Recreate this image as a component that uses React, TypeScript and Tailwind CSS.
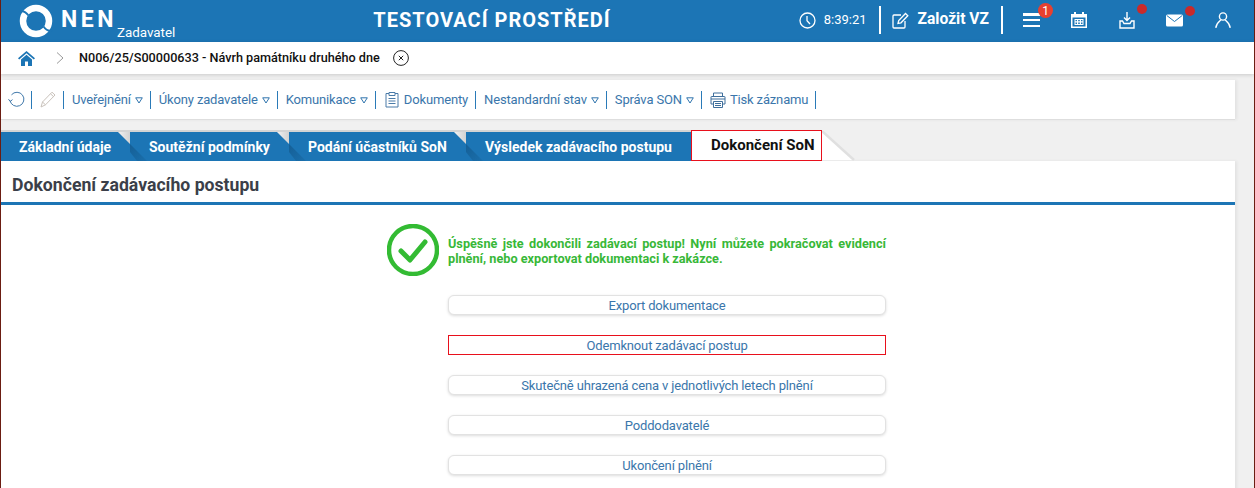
import React from "react";

const BLUE = "#1c75b5";

function Caret() {
  return (
    <svg width="8" height="7" viewBox="0 0 8 7" className="ml-[4px] mt-[2px] shrink-0">
      <path d="M0.7 0.8 H7.3 L4 6 Z" fill="none" stroke="#2f74ad" strokeWidth="1" />
    </svg>
  );
}

function TBItem({ children, caret }: { children: React.ReactNode; caret?: boolean }) {
  return (
    <>
      <span className="flex items-center whitespace-nowrap text-[13px] tracking-[-0.15px] text-[#3a76ab]">
        {children}
        {caret && <Caret />}
      </span>
      <span className="ml-[7px] mr-[8px] h-[18px] w-px shrink-0 bg-[#2a7ab8]" />
    </>
  );
}

function Fold() {
  return (
    <svg width="32" height="29" viewBox="0 0 32 29" className="absolute left-[-12px] top-0 z-10">
      <defs>
        <linearGradient id="fold" x1="0" y1="0" x2="1" y2="0">
          <stop offset="0" stopColor="#f2f2f2" />
          <stop offset="1" stopColor="#d2d2d2" />
        </linearGradient>
        <linearGradient id="shade" x1="0" y1="0" x2="1" y2="1">
          <stop offset="0" stopColor="#155f96" />
          <stop offset="1" stopColor="#1a6fac" />
        </linearGradient>
      </defs>
      <polygon points="0,0 12,0 12,12" fill="url(#fold)" />
      <polygon points="12,12 29,29 19,29 12,20" fill="url(#shade)" />
    </svg>
  );
}

function Tab({ w, children, first }: { w: string; children: React.ReactNode; first?: boolean }) {
  return (
    <div className={`relative flex h-[29px] items-center pt-[1px] text-[14px] font-bold text-white ${first ? "pl-[18px]" : "pl-[19px]"} ${w} bg-[#1c75b5] shadow-[0_-2px_0_#d4d4d4]`}>
      {!first && <Fold />}
      <span className="relative z-20">{children}</span>
    </div>
  );
}

function Btn({ children, red }: { children: React.ReactNode; red?: boolean }) {
  return (
    <div
      className={
        "flex h-5 w-[438px] items-center justify-center bg-white pt-[1px] text-[13px] tracking-[-0.15px] text-[#3a76ab] " +
        (red ? "border border-[#e8101c]" : "rounded-md border border-[#e2e2e2] shadow-[0_1px_3px_rgba(0,0,0,0.14)]")
      }
    >
      {children}
    </div>
  );
}

function Logo() {
  return (
    <svg width="34" height="34" viewBox="0 0 34 34" fill="none">
      <circle cx="17" cy="17" r="13" stroke="#fff" strokeWidth="6.5" />
      <path d="M9.5 11.5 C7 8 4.5 6.5 1 7.5" stroke={BLUE} strokeWidth="2" />
      <path d="M24.5 22.5 C27 26 29.5 27.5 33 26.5" stroke={BLUE} strokeWidth="2" />
    </svg>
  );
}

export default function App() {
  return (
    <div className="relative h-[488px] w-full overflow-hidden border-x border-[#6b1d12] bg-[#f0f0f0] font-['Roboto',sans-serif]">
      {/* header */}
      <header className="flex h-[42px] items-center bg-[#1c75b5] text-white">
        <div className="ml-[18px] shrink-0">
          <Logo />
        </div>
        <span className="mb-[3px] ml-[8px] text-[23px] font-bold leading-none tracking-[3.5px]">NEN</span>
        <span className="mt-[23px] text-[13.4px] leading-none">Zadavatel</span>
        <span className="mb-[2px] ml-[198px] whitespace-nowrap text-[20px] font-bold tracking-[1px]">TESTOVACÍ PROSTŘEDÍ</span>
        <div className="mb-[2px] ml-auto flex items-center">
          <svg width="17" height="17" viewBox="0 0 17 17" fill="none" stroke="#fff" strokeWidth="1.3" className="shrink-0">
            <circle cx="8.5" cy="8.5" r="7.5" />
            <path d="M8 4 V8.7 L11 12" />
          </svg>
          <span className="ml-[8px] text-[13px]">8:39:21</span>
          <span className="ml-[12px] h-[28px] w-[2px] bg-white" />
          <svg width="17" height="17" viewBox="0 0 17 17" fill="none" stroke="#fff" strokeWidth="1.3" className="ml-[11px] shrink-0">
            <path d="M9 3 H2 Q1 3 1 4 V15 Q1 16 2 16 H12 Q13 16 13 15 V9" />
            <path d="M6 11.5 L6.7 8.5 L13.5 1.5 L15.8 3.7 L9 10.8 Z" />
          </svg>
          <span className="ml-[9px] text-[15.6px] font-bold">Založit VZ</span>
          <span className="ml-[12px] h-[28px] w-[2px] bg-white" />
          <div className="relative ml-[20px] h-[14px] w-[17px]">
            <div className="flex h-full flex-col justify-between">
              <span className="h-[2.5px] bg-white" />
              <span className="h-[2.5px] bg-white" />
              <span className="h-[2.5px] bg-white" />
            </div>
            <span className="absolute left-[15px] top-[-10px] flex h-[15px] w-[15px] items-center justify-center rounded-full bg-[#e8402f] text-[12px] leading-none">1</span>
          </div>
          <svg width="16" height="16" viewBox="0 0 16 16" className="ml-[31px] shrink-0" fill="#fff">
            <path fillRule="evenodd" d="M0 2 H3 V0 H5 V2 H11 V0 H13 V2 H16 V16 H0 Z M1.5 5.5 V14.5 H14.5 V5.5 Z" />
            <path d="M3.5 7 H12.5 V13 H3.5 Z M4.5 8 V9.3 H6 V8 Z M7.2 8 V9.3 H8.8 V8 Z M10 8 V9.3 H11.5 V8 Z M4.5 10.5 V12 H6 V10.5 Z M7.2 10.5 V12 H8.8 V10.5 Z M10 10.5 V12 H11.5 V10.5 Z" fillRule="evenodd" />
          </svg>
          <div className="relative ml-[32px] h-[17px] w-[16px]">
            <svg width="16" height="17" viewBox="0 0 16 17" fill="none" stroke="#fff" strokeWidth="1.4">
              <path d="M8 0 V8 M5 5.5 L8 8.5 L11 5.5" />
              <path d="M3.5 9 H1 V16 H15 V9 H12.5 L11 11.5 H5 Z" />
            </svg>
            <span className="absolute left-[18px] top-[-8px] h-[10px] w-[10px] rounded-full bg-[#c92a2a]" />
          </div>
          <div className="relative ml-[31px] h-[13px] w-[17px]">
            <svg width="17" height="13" viewBox="0 0 17 13">
              <rect width="17" height="12" y="0.5" rx="1.5" fill="#fff" />
              <path d="M0.8 1.5 L8.5 7.5 L16.2 1.5" fill="none" stroke="#1c75b5" strokeWidth="1" />
            </svg>
            <span className="absolute left-[19px] top-[-8px] h-[10px] w-[10px] rounded-full bg-[#c92a2a]" />
          </div>
          <svg width="16" height="16" viewBox="0 0 16 16" fill="none" stroke="#fff" strokeWidth="1.4" className="ml-[32px] mr-[23px] shrink-0">
            <circle cx="8" cy="4.5" r="3.6" />
            <path d="M0.8 15.8 C1.5 11 4 9.5 5.8 8 M15.2 15.8 C14.5 11 12 9.5 10.2 8" />
          </svg>
        </div>
      </header>

      {/* breadcrumb */}
      <div className="relative z-10 flex h-[32px] items-center bg-white shadow-[0_1px_4px_rgba(0,0,0,0.16)]">
        <svg width="17" height="15" viewBox="0 0 17 15" className="ml-[17px] shrink-0" fill={BLUE}>
          <path d="M8.5 0 L17 7.2 L15.8 8.4 L8.5 2.3 L1.2 8.4 L0 7.2 Z" />
          <path d="M3 8.5 L8.5 3.8 L14 8.5 V15 H10 V10.5 H7 V15 H3 Z" />
        </svg>
        <svg width="8" height="12" viewBox="0 0 8 12" fill="none" stroke="#9a9a9a" strokeWidth="1" className="ml-[21px] shrink-0">
          <path d="M1 0.5 L7 6 L1 11.5" />
        </svg>
        <span className="ml-[15px] whitespace-nowrap text-[12.65px] font-medium text-[#111]">N006/25/S00000633 - Návrh památníku druhého dne</span>
        <svg width="16" height="16" viewBox="0 0 16 16" fill="none" stroke="#222" strokeWidth="1" className="ml-[13px] shrink-0">
          <circle cx="8" cy="8" r="7.4" />
          <path d="M5.8 5.8 L10.2 10.2 M10.2 5.8 L5.8 10.2" />
        </svg>
      </div>

      {/* toolbar */}
      <div className="mr-[19px] mt-[6px] flex h-[40px] items-center border-b border-[#dedede] bg-white pl-[7px] shadow-[2px_0_3px_rgba(0,0,0,0.06)]">
        <svg width="17" height="17" viewBox="0 0 17 17" fill="none" stroke="#3f78aa" strokeWidth="1" className="shrink-0">
          <path d="M3.5 3.8 A7 7 0 1 1 2 9.5" />
          <path d="M0.5 8.2 L2.2 10.5 L4.5 8.6" />
        </svg>
        <span className="ml-[6px] mr-[8px] h-[18px] w-px bg-[#2a7ab8]" />
        <svg width="16" height="17" viewBox="0 0 16 17" fill="none" stroke="#c9c2bb" strokeWidth="1" className="shrink-0">
          <path d="M1 16 L2.5 11 L12 1.2 L15 4 L5.5 13.8 Z M2.5 11 L5.5 13.8 M10.5 2.8 L13.5 5.6" />
        </svg>
        <span className="mx-[7px] h-[18px] w-px bg-[#2a7ab8]" />
        <span className="w-px" />
        <TBItem caret>Uveřejnění</TBItem>
        <TBItem caret>Úkony zadavatele</TBItem>
        <TBItem caret>Komunikace</TBItem>
        <TBItem>
          <svg width="14" height="17" viewBox="0 0 14 17" fill="none" stroke="#4a7ba8" strokeWidth="1" className="ml-[1px] mr-[5px] shrink-0">
            <path d="M4 2.5 H1 V16 H13 V2.5 H10" />
            <path d="M4 1.5 H10 V4.5 H4 Z" />
            <path d="M3.5 7.5 H10.5 M3.5 10 H10.5 M3.5 12.5 H10.5" />
          </svg>
          Dokumenty
        </TBItem>
        <TBItem caret>Nestandardní stav</TBItem>
        <TBItem caret>Správa SON</TBItem>
        <TBItem>
          <svg width="16" height="16" viewBox="0 0 16 16" fill="none" stroke="#3f6f9c" strokeWidth="1" className="mr-[4px] shrink-0">
            <path d="M3.5 4.5 V1 H12.5 V4.5" />
            <path d="M3.5 12 H1 V5 Q1 4.5 1.5 4.5 H14.5 Q15 4.5 15 5 V12 H12.5" />
            <path d="M3.5 9.5 H12.5 V15.5 H3.5 Z M5 11.5 H11 M5 13.5 H11 M1 7 H15" />
          </svg>
          Tisk záznamu
        </TBItem>
      </div>

      {/* tabs */}
      <div className="mt-[12px] flex h-[29px] items-stretch">
        <Tab w="w-[129px]" first>Základní údaje</Tab>
        <Tab w="w-[159px]">Soutěžní podmínky</Tab>
        <Tab w="w-[177px]">Podání účastníků SoN</Tab>
        <Tab w="w-[225px]">Výsledek zadávacího postupu</Tab>
        <div className="relative z-20 mt-[-2px] flex h-[31px] w-[131px] items-center border border-[#e8101c] bg-white pl-[19px] text-[15px] font-bold text-[#111]">
          Dokončení SoN
          <svg width="33" height="30" viewBox="0 0 33 30" className="absolute left-[130px] top-[0px]">
            <polygon points="0,0 32,29 0,29" fill="#fff" />
            <path d="M0 0 L32 29" stroke="#e0e0e0" strokeWidth="2.5" />
          </svg>
        </div>
      </div>

      {/* main */}
      <main className="mr-[19px] h-full bg-white shadow-[2px_0_3px_rgba(0,0,0,0.06)]">
        <div className="flex h-[44px] items-center border-b-[3px] border-[#1c75b5] pl-[11px] pt-[7px] text-[17.65px] font-bold text-[#3b3f49]">
          Dokončení zadávacího postupu
        </div>
        <div className="ml-[447px] w-[438px]">
          <div className="relative pt-[31px]">
            <svg width="52" height="52" viewBox="0 0 52 52" fill="none" stroke="#33bb33" className="absolute left-[-61px] top-[19px]">
              <circle cx="26" cy="26" r="24" strokeWidth="4.5" />
              <path d="M14 27 L23 36 L38 18" strokeWidth="5" strokeLinecap="round" strokeLinejoin="round" />
            </svg>
            <p className="text-justify text-[12.7px] font-bold leading-[15px] text-[#38b838]">
              Úspěšně jste dokončili zadávací postup! Nyní můžete pokračovat evidencí plnění, nebo exportovat dokumentaci k zakázce.
            </p>
          </div>
          <div className="mt-[29px] flex flex-col gap-5">
            <Btn>Export dokumentace</Btn>
            <Btn red>Odemknout zadávací postup</Btn>
            <Btn>Skutečně uhrazená cena v jednotlivých letech plnění</Btn>
            <Btn>Poddodavatelé</Btn>
            <Btn>Ukončení plnění</Btn>
          </div>
        </div>
      </main>
    </div>
  );
}
